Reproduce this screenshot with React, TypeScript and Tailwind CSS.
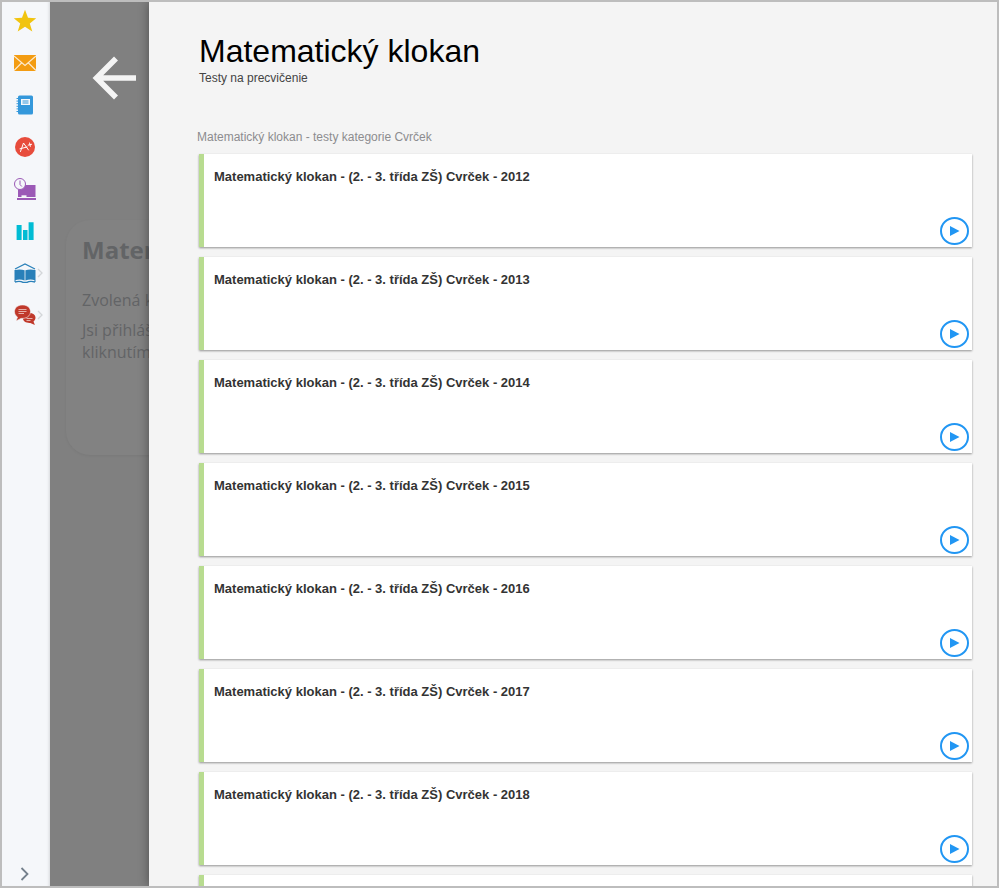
import type { ReactNode } from "react";

interface MenuItem {
  label: string;
  icon: ReactNode;
  hasSubmenu?: boolean;
}

const menuItems: MenuItem[] = [
  {
    label: "Oblíbené",
    icon: <path fill="#f1c40f" d="M12 .8 15 8.8 23.2 9.2 16.8 14.4 19.3 22.4 12 17.8 4.7 22.4 7.2 14.4 .8 9.2 9 8.8Z" />,
  },
  {
    label: "Zprávy",
    icon: (
      <>
        <path fill="#f39c12" d="M1 4H23V20H1Z" />
        <path fill="none" stroke="#fdebd0" strokeWidth="1.1" d="m1 5 11 9.5L23 5M1 19.5 8.5 12M23 19.5 15.5 12" />
      </>
    ),
  },
  {
    label: "Zápisník",
    icon: (
      <>
        <rect x="5" y="2.5" width="15" height="19" rx="1.5" fill="#3498db" />
        <path stroke="#3498db" strokeWidth="1" d="M3.5 5.5H6m-2.5 2.6H6m-2.5 2.6H6m-2.5 2.6H6m-2.5 2.6H6m-2.5 2.6H6" />
        <path fill="#f5f7fa" d="M8 6h9v6H8Z" />
        <path stroke="#3498db" d="M9.5 8h6m-6 2h6" />
      </>
    ),
  },
  {
    label: "Hodnocení",
    icon: (
      <>
        <circle cx="12" cy="12" r="10" fill="#e74c3c" />
        <path fill="none" stroke="#fff" strokeWidth="1" strokeLinecap="round" d="M7.5 16.5 10.5 8 15.5 15M7 13.8l7-1.8M15.2 10.1l3.4-.8M16.6 8l.7 3.4" />
      </>
    ),
  },
  {
    label: "Online výuka",
    icon: (
      <>
        <path fill="#9b59b6" d="M5 8H22.5V20H5ZM4 21H23V23H4Z" />
        <path fill="#f5f7fa" d="M8.5 18.3h5V20h-5Z" />
        <circle cx="7" cy="7" r="5.5" fill="#f5f7fa" stroke="#9b59b6" />
        <path fill="none" stroke="#9b59b6" d="M7 3.5V7.5L8.8 9.5" />
      </>
    ),
  },
  {
    label: "Statistiky",
    icon: <path fill="#00bcd4" d="M3.6 6H8.6V21H3.6ZM10 11h4.5v10H10ZM15.6 3.2h5V21h-5Z" />,
  },
  {
    label: "Knihovna",
    hasSubmenu: true,
    icon: (
      <>
        <path fill="none" stroke="#2980b9" strokeWidth="1.2" d="M2 8 12 3 22 8" />
        <path fill="#2980b9" d="M2 9Q7 7.8 11.6 9.3V19.5Q7 17.8 2 19.2ZM22 9Q17 7.8 12.4 9.3V19.5Q17 17.8 22 19.2Z" />
        <path fill="none" stroke="#2980b9" strokeWidth="1.4" d="M2 21Q7 19.6 10 21.4H14Q17 19.6 22 21" />
        <path fill="#2980b9" d="M1.5 9h1v12h-1Zm20 0h1v12h-1Z" />
      </>
    ),
  },
  {
    label: "Diskuze",
    hasSubmenu: true,
    icon: (
      <>
        <path fill="#c0392b" d="M16 10c4 0 6.5 2 6.5 4.8 0 1.5-.8 2.8-2 3.6l1.4 3.6-4.6-2c-4 .3-7.3-1.5-7.3-4.4Z" />
        <path fill="#c0392b" stroke="#f5f7fa" strokeWidth=".6" d="M9.5 2C4.8 2 1.5 4.6 1.5 8.6c0 2.4 1.2 4.4 3 5.5L3 18l5-2.6c5.4.4 9.5-2.4 9.5-6.8C17.5 4.6 14.2 2 9.5 2Z" />
        <path stroke="#e6b0aa" d="M5.5 6.5h8m-8 2h8m-8 2h5.5m2.5 5h6m-6 2h4" />
      </>
    ),
  },
];

const years = [2012, 2013, 2014, 2015, 2016, 2017, 2018, 2019];

function Sidebar() {
  return (
    <aside className="relative z-10 flex w-12 shrink-0 flex-col justify-between bg-[#f5f7fa] shadow-[inset_-3px_0_3px_-2px_rgba(0,0,0,0.12)]">
      <nav className="flex flex-col gap-[18px] pt-[7px]">
        {menuItems.map((item) => (
          <button key={item.label} type="button" aria-label={item.label} className="flex items-center pl-[11px]">
            <svg viewBox="0 0 24 24" className="size-6 shrink-0">{item.icon}</svg>
            {item.hasSubmenu && (
              <svg viewBox="0 0 6 10" className="h-[10px] w-[6px] shrink-0">
                <path d="M1 1 5 5 1 9" fill="none" stroke="#d3d6d9" strokeWidth="1.3" />
              </svg>
            )}
          </button>
        ))}
      </nav>
      <button type="button" aria-label="Rozbalit menu" className="pb-1 pl-[18px]">
        <svg viewBox="0 0 10 16" className="h-4 w-[10px]">
          <path d="M1.5 2 7.5 8 1.5 14" fill="none" stroke="#74808c" strokeWidth="1.8" />
        </svg>
      </button>
    </aside>
  );
}

function Backdrop() {
  return (
    <section className="w-[99px] shrink-0 overflow-hidden bg-[#808080] font-['Open_Sans',sans-serif] text-[#626466]">
      <button type="button" aria-label="Zpět" className="mt-[53px] ml-[42px] block">
        <svg viewBox="0 0 44 46" className="h-[46px] w-11">
          <path d="M24 3.5 4.5 23 24 42.5M5 23H44" fill="none" stroke="#f4f4f4" strokeWidth="5.6" />
        </svg>
      </button>
      <div className="mt-[119px] ml-4 h-[235px] w-[600px] rounded-3xl bg-[#828282] px-4 pt-3 shadow-[0_1px_3px_rgba(0,0,0,0.06)]">
        <h2 className="text-2xl leading-9 font-bold">Matematický klokan</h2>
        <p className="mt-[21px] text-base leading-[22px]">Zvolená kategorie</p>
        <p className="mt-2 text-base leading-[22px]">
          Jsi přihlášen
          <br />
          kliknutím na test
        </p>
      </div>
    </section>
  );
}

function TestCard({ year }: { year: number }) {
  return (
    <article className="flex h-[93px] shrink-0 justify-between border-l-[5px] border-[#b8dc90] bg-white shadow-[0_1px_2px_rgba(0,0,0,0.4)]">
      <h3 className="pt-[13px] pl-[10px] text-[13px] leading-5 font-bold text-[#333]">
        Matematický klokan - (2. - 3. třída ZŠ) Cvrček - {year}
      </h3>
      <button type="button" aria-label={`Spustit test ${year}`} className="self-end pr-[3px] pb-[2px]">
        <svg viewBox="0 0 30 28" className="h-7 w-[30px]">
          <ellipse cx="15.5" cy="14" rx="13.5" ry="13" fill="none" stroke="#2196f3" strokeWidth="2" />
          <path d="M11 9 20.5 14 11 19Z" fill="#2196f3" />
        </svg>
      </button>
    </article>
  );
}

export default function App() {
  return (
    <div className="flex h-screen overflow-hidden border-2 border-[#bdbdbd] bg-[#808080] font-['Liberation_Sans',Arial,sans-serif]">
      <Sidebar />
      <Backdrop />
      <main className="relative min-w-0 flex-1 overflow-hidden bg-[#f4f4f4] pr-[25px] pl-[50px] shadow-[0_0_10px_rgba(0,0,0,0.4)]">
        <header className="pt-[29px]">
          <h1 className="text-[32px] leading-10 text-black">Matematický klokan</h1>
          <p className="text-xs leading-[14px] text-[#444]">Testy na precvičenie</p>
        </header>
        <h2 className="-ml-[2px] pt-[42px] text-xs leading-5 text-[#8c8c8f]">
          Matematický klokan - testy kategorie Cvrček
        </h2>
        <div className="mt-[7px] flex flex-col gap-[10px]">
          {years.map((year) => (
            <TestCard key={year} year={year} />
          ))}
        </div>
      </main>
    </div>
  );
}
